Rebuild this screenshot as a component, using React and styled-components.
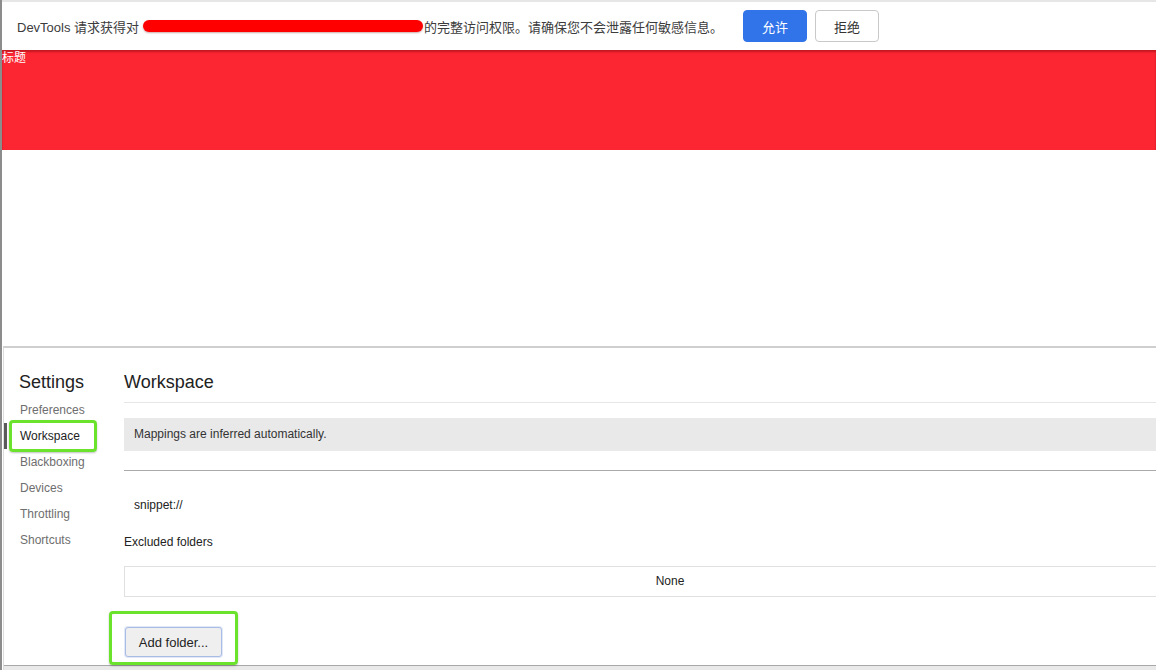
import styled, { createGlobalStyle } from "styled-components";

const GlobalStyle = createGlobalStyle`
  html, body {
    margin: 0;
    padding: 0;
    background: #ffffff;
  }
  body {
    font-family: "Liberation Sans", Arial, "Noto Sans CJK SC", sans-serif;
    color: #333333;
  }
`;

const Page = styled.div`
  display: flex;
  flex-direction: column;
  width: 1156px;
  height: 670px;
  overflow: hidden;
  box-sizing: border-box;
  border-left: 2px solid #8c8c8c;
`;

const InfoBar = styled.div`
  display: flex;
  align-items: center;
  height: 48px;
  border-top: 2px solid #e6e6e6;
  padding-left: 15px;
  font-size: 13px;
  color: #3c3c3c;
  white-space: nowrap;
`;

const Redacted = styled.span`
  display: inline-block;
  width: 280px;
  height: 12px;
  margin: 0 1px 0 4px;
  border-radius: 6px;
  background: #ff0000;
  box-shadow: 0 1px 2px rgba(120, 0, 0, 0.35);
`;

const BarButton = styled.button`
  height: 32px;
  width: 64px;
  margin-left: ${(p) => p.$gap}px;
  border-radius: 4px;
  font-family: inherit;
  font-size: 13px;
  cursor: pointer;
  border: 1px solid ${(p) => (p.$primary ? "#3174ea" : "#c9c9c9")};
  background: ${(p) => (p.$primary ? "#3174ea" : "#ffffff")};
  color: ${(p) => (p.$primary ? "#ffffff" : "#333333")};
`;

const Banner = styled.div`
  height: 100px;
  background: #fc2532;
  box-shadow: inset 0 2px 2px rgba(90, 0, 0, 0.35);
  color: #ffffff;
  font-size: 12px;
  line-height: 16px;
`;

const Blank = styled.div`
  height: 196px;
  background: #ffffff;
`;

const Panel = styled.div`
  flex: 1;
  display: flex;
  flex-direction: column;
  border-top: 2px solid #cfcfcf;
  margin-left: 1px;
  border-left: 1px solid #dcdcdc;
  min-height: 0;
`;

const Settings = styled.div`
  flex: 1;
  display: flex;
  min-height: 0;
`;

const Sidebar = styled.div`
  width: 120px;
  flex-shrink: 0;
  padding-top: 23px;
`;

const Heading = styled.div`
  font-size: 18px;
  line-height: 22px;
  color: #222222;
  padding-left: ${(p) => p.$indent || 0}px;
`;

const NavList = styled.div`
  display: flex;
  flex-direction: column;
  margin-top: 4px;
`;

const NavItem = styled.div`
  position: relative;
  height: 26px;
  line-height: 26px;
  padding-left: 13px;
  font-size: 12px;
  color: ${(p) => (p.$active ? "#222222" : "#6e6e6e")};
  border-left: 3px solid ${(p) => (p.$active ? "#5a5a5a" : "transparent")};
`;

const Ring = styled.span`
  position: absolute;
  left: ${(p) => p.$left}px;
  top: ${(p) => p.$top}px;
  width: ${(p) => p.$w}px;
  height: ${(p) => p.$h}px;
  box-sizing: border-box;
  border: 3px solid #6be22b;
  border-radius: 4px;
  box-shadow: 0 1px 2px rgba(0, 0, 0, 0.25);
  pointer-events: none;
`;

const Content = styled.div`
  flex: 1;
  min-width: 0;
  padding-top: 23px;
`;

const TitleBlock = styled.div`
  padding-bottom: 9px;
  border-bottom: 1px solid #e6e6e6;
`;

const Notice = styled.div`
  margin-top: 15px;
  height: 33px;
  line-height: 33px;
  padding-left: 10px;
  background: #e9e9e9;
  font-size: 12px;
  color: #333333;
`;

const Rule = styled.div`
  margin-top: 19px;
  border-top: 1px solid #aaaaaa;
`;

const Line = styled.div`
  height: 26px;
  line-height: 26px;
  font-size: 12px;
  color: #222222;
  margin-top: ${(p) => p.$top}px;
  padding-left: ${(p) => p.$indent || 0}px;
`;

const EmptyBox = styled.div`
  margin-top: 11px;
  width: 1090px;
  height: 29px;
  line-height: 29px;
  border: 1px solid #e0e0e0;
  text-align: center;
  font-size: 12px;
  color: #222222;
`;

const ButtonWrap = styled.div`
  position: relative;
  margin-top: 30px;
  margin-left: 1px;
  width: 97px;
`;

const AddButton = styled.button`
  width: 97px;
  height: 30px;
  border: 1px solid #a9bce6;
  border-radius: 3px;
  background: #efefef;
  font-family: inherit;
  font-size: 13px;
  color: #222222;
  box-shadow: 0 0 0 1px rgba(169, 188, 230, 0.35);
  cursor: pointer;
`;

const Footer = styled.div`
  height: 4px;
  border-top: 1px solid #a8a8a8;
  background: #e9e9e9;
`;

const navItems = ["Preferences", "Workspace", "Blackboxing", "Devices", "Throttling", "Shortcuts"];

const App = () => {
  return (
    <>
      <GlobalStyle />
      <Page>
        <InfoBar>
          DevTools 请求获得对
          <Redacted />
          的完整访问权限。请确保您不会泄露任何敏感信息。
          <BarButton $primary $gap={20}>允许</BarButton>
          <BarButton $gap={8}>拒绝</BarButton>
        </InfoBar>
        <Banner>标题</Banner>
        <Blank />
        <Panel>
          <Settings>
            <Sidebar>
              <Heading $indent={15}>Settings</Heading>
              <NavList>
                {navItems.map((item) => (
                  <NavItem key={item} $active={item === "Workspace"}>
                    {item}
                    {item === "Workspace" && <Ring $left={2} $top={-3} $w={88} $h={32} />}
                  </NavItem>
                ))}
              </NavList>
            </Sidebar>
            <Content>
              <TitleBlock>
                <Heading>Workspace</Heading>
              </TitleBlock>
              <Notice>Mappings are inferred automatically.</Notice>
              <Rule />
              <Line $top={21} $indent={10}>snippet://</Line>
              <Line $top={11}>Excluded folders</Line>
              <EmptyBox>None</EmptyBox>
              <ButtonWrap>
                <AddButton>Add folder...</AddButton>
                <Ring $left={-16} $top={-16} $w={129} $h={54} />
              </ButtonWrap>
            </Content>
          </Settings>
          <Footer />
        </Panel>
      </Page>
    </>
  );
};

export default App;
